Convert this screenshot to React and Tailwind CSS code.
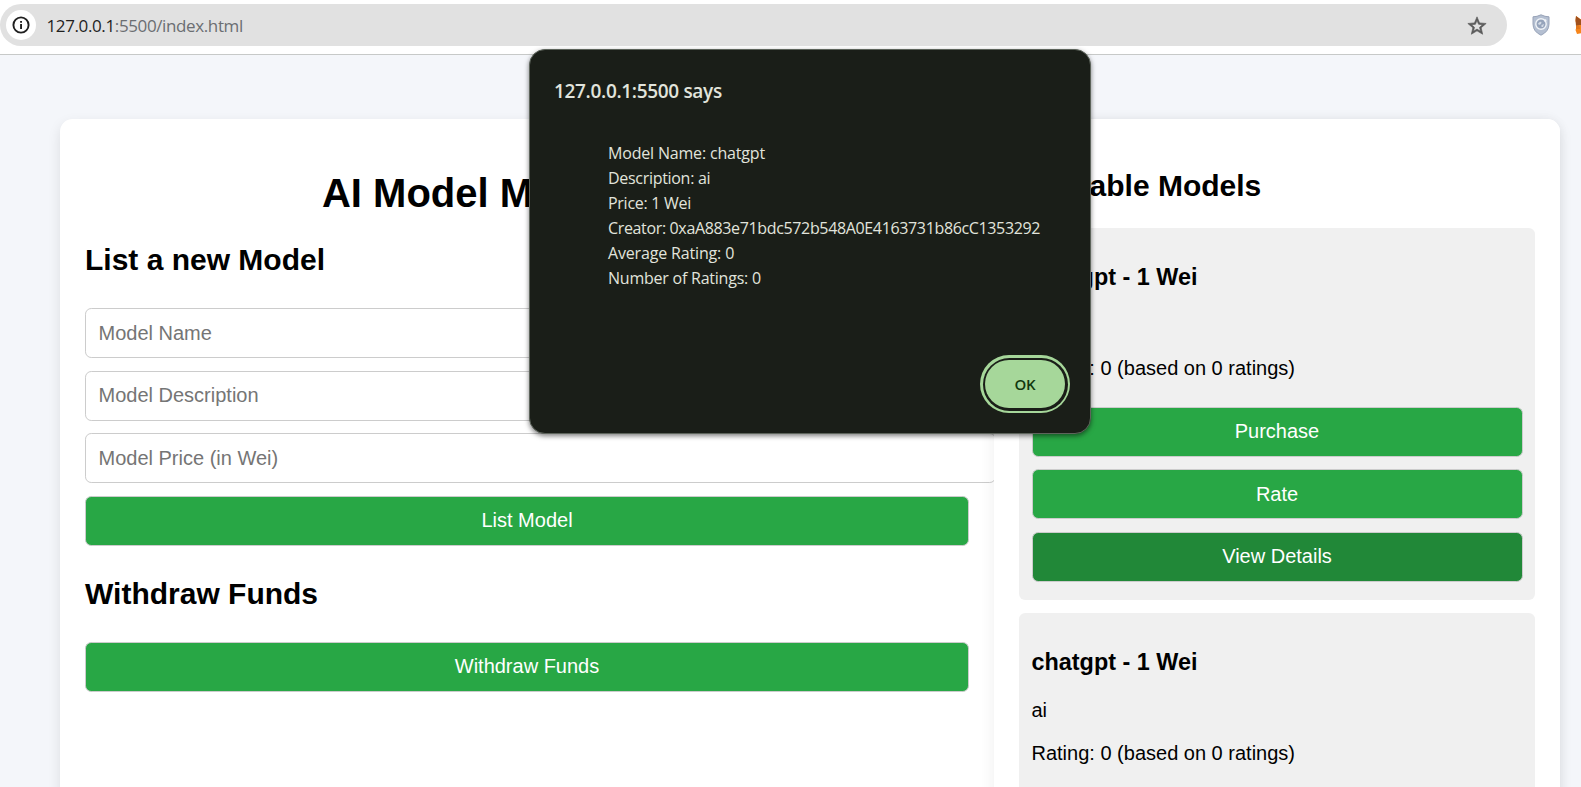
const h2 = "h-[34px] text-[30px] leading-[34px] font-bold";
const box = "h-[50px] rounded-[6.25px] border border-[#ccc] text-[20px] leading-[23px]";
const btn = box + " block w-full text-center text-white";

function Button({ dark, children }) {
  return <button className={`${btn} ${dark ? "bg-[#218838]" : "bg-[#28a745]"}`}>{children}</button>;
}

function ModelCard({ active }) {
  return (
    <div className="mb-[12.5px] rounded-[6.25px] bg-[#f0f0f0] p-[12.5px] pb-[18.5px]">
      <h3 className="mt-[23.4px] mb-[23px] h-[27px] text-[23.4px] leading-[27px] font-bold">chatgpt - 1 Wei</h3>
      <p className="mb-[20px] text-[20px] leading-[23px]">ai</p>
      <p className="mb-[27px] text-[20px] leading-[23px]">Rating: 0 (based on 0 ratings)</p>
      <div className="flex flex-col gap-[12.5px]">
        <Button>Purchase</Button>
        <Button>Rate</Button>
        <Button dark={active}>View Details</Button>
      </div>
    </div>
  );
}

function Toolbar() {
  return (
    <header className="flex h-[55px] shrink-0 items-start border-b border-[#c7c9c8] bg-white pt-1">
      <div className="flex h-[42px] w-[1507px] shrink-0 items-center rounded-full bg-[#e1e1e1] pr-[19px] pl-[6px]">
        <span className="flex size-[30px] items-center justify-center rounded-full bg-white">
          <svg width="18" height="18" viewBox="0 0 18 18">
            <circle cx="9" cy="9" r="7.6" fill="none" stroke="#1f1f1f" strokeWidth="1.9" />
            <path d="M8.1 8h1.9v5H8.1zM8.1 4.9h1.9v1.9H8.1z" fill="#1f1f1f" />
          </svg>
        </span>
        <span className="mt-px ml-[10.5px] font-['Open_Sans','Noto_Sans',sans-serif] text-[17px] leading-[24px] tracking-[-0.38px] text-[#6b6e72]">
          <span className="text-[#1f1f1f]">127.0.0.1</span>:5500/index.html
        </span>
        <svg className="mt-px ml-auto" width="22" height="22" viewBox="0 0 24 24" fill="#5a5a5a" stroke="#5a5a5a" strokeWidth=".7">
          <path d="M22 9.24l-7.19-.62L12 2 9.19 8.63 2 9.24l5.46 4.73L5.82 21 12 17.27 18.18 21l-1.63-7.03L22 9.24zM12 15.4l-3.76 2.27 1-4.28-3.32-2.88 4.38-.38L12 6.1l1.71 4.04 4.38.38-3.32 2.88 1 4.28L12 15.4z" />
        </svg>
      </div>
      <svg className="mt-[10px] ml-[25px] shrink-0" width="18" height="22" viewBox="0 0 18 22">
        <path d="M9 .8Q13 2.8 17 2.8V10Q17 17.500 9 21.200Q1 17.500 1 10V2.800Q5 2.800 9 .8Z" fill="#b4bfd1" stroke="#98a3b8" strokeWidth="1" />
        <circle cx="9" cy="10" r="5.200" fill="#96a4bb" stroke="#f1f4f8" strokeWidth="1.400" />
        <path d="M6 9.500Q8 7 9.500 8L9 10L7 11ZM9.500 11L12 10L11 13L9.500 13Z" fill="#d3dae5" />
        <circle cx="13.300" cy="6.500" r="1.200" fill="#f1f4f8" />
      </svg>
      <svg className="mt-[12px] ml-[25px] shrink-0" width="20" height="19" viewBox="0 0 20 19">
        <path d="M1 0L9 5.500H12L19 0L20 6L18.500 12L19.500 15L18 18L13 17H7L2 18L.5 14L2 10L.5 5Z" fill="#f6851b" />
        <path d="M1 0L9 6L7 9L4 9L1 10L.5 4Z" fill="#a0501c" />
        <path d="M1 10L4 9L5 13L1 13Z" fill="#e2761b" />
      </svg>
    </header>
  );
}

function Dialog() {
  return (
    <div className="absolute top-[49px] left-[529px] h-[385px] w-[562px] rounded-[16px] border border-[#5d645b] bg-[#1a1e18] font-['Open_Sans','Noto_Sans',sans-serif] text-[#e1e4dc] shadow-[0_2px_5px_rgba(0,0,0,0.5)]">
      <h4 className="mt-[28px] ml-[24px] h-[26px] text-[19px] leading-[26px] font-semibold tracking-[-0.33px]">127.0.0.1:5500 says</h4>
      <div className="mt-[37px] ml-[78px] text-[16px] leading-[25px] whitespace-nowrap">
        <p className="tracking-[-0.18px]">Model Name: chatgpt</p>
        <p className="tracking-[-0.3px]">Description: ai</p>
        <p className="tracking-[-0.27px]">Price: 1 Wei</p>
        <p className="tracking-[-0.35px]">Creator: 0xaA883e71bdc572b548A0E4163731b86cC1353292</p>
        <p className="tracking-[-0.16px]">Average Rating: 0</p>
        <p className="tracking-[-0.23px]">Number of Ratings: 0</p>
      </div>
      <div className="mt-[64px] mr-[20px] ml-auto h-[58px] w-[90px] rounded-full bg-[#a6d79a] p-[2.5px]">
        <div className="h-full rounded-full bg-[#1a1e18] p-[2.5px]">
          <button className="flex h-full w-full items-center justify-center rounded-full bg-[#a6d79a] text-[15px] font-semibold tracking-[-0.2px] text-[#11380f]">OK</button>
        </div>
      </div>
    </div>
  );
}

export default function App() {
  return (
    <div className="relative flex h-[787px] w-[1581px] flex-col overflow-hidden bg-[#f4f6fa] font-['Liberation_Sans',Arial,sans-serif] text-black">
      <Toolbar />
      <main className="mt-[64px] ml-[60px] flex h-[900px] w-[1500px] shrink-0 rounded-[12.5px] bg-white shadow-[0_5px_12.5px_rgba(0,0,0,0.1)]">
        <section className="w-[934px] shrink-0 px-[25px] pt-[51px]">
          <h1 className="-ml-px h-[46px] text-center text-[40px] leading-[46px] font-bold">AI Model Marketplace</h1>
          <h2 className={h2 + " mt-[27px] mb-[31px]"}>List a new Model</h2>
          <div className="flex flex-col gap-[12.5px]">
            {["Model Name", "Model Description", "Model Price (in Wei)"].map((p) => (
              <input key={p} placeholder={p} className={box + " w-[911px] bg-white px-[12.5px] placeholder:text-[#757575]"} />
            ))}
            <Button>List Model</Button>
          </div>
          <h2 className={h2 + " mt-[31.2px] mb-[30.9px]"}>Withdraw Funds</h2>
          <Button>Withdraw Funds</Button>
        </section>
        <section className="relative w-[566px] shrink-0 rounded-r-[12.5px] bg-white px-[25px] pt-[25px] shadow-[-2.5px_0_12.5px_rgba(0,0,0,0.05)]">
          <h2 className="mt-[24.9px] mb-[25.1px] h-[34px] text-[30px] leading-[34px] font-bold">Available Models</h2>
          <ModelCard active />
          <ModelCard />
        </section>
      </main>
      <Dialog />
    </div>
  );
}
